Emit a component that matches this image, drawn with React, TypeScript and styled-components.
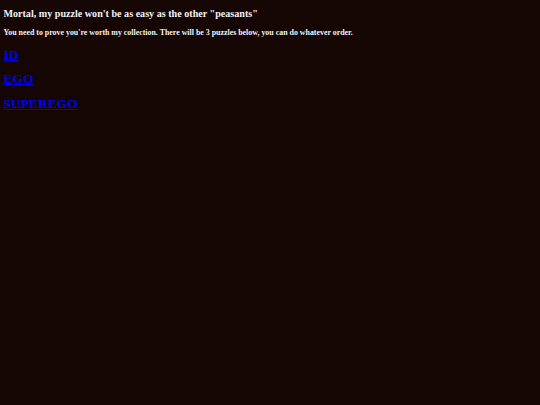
import * as React from 'react';
import styled, { createGlobalStyle } from 'styled-components';

const GlobalStyle = createGlobalStyle`
    html, body {
        margin: 0;
        padding: 0;
        background-color: #150604;
    }

    body {
        font-family: "Liberation Serif", "Times New Roman", serif;
        color: #f2f2f2;
    }
`;

// whole page is drawn at ~0.42 of a normal desktop page
const PuzzlePage = styled.div`
    min-height: 405px;
    padding: 8.4px 3.4px;
    box-sizing: border-box;
    display: flex;
    flex-direction: column;
`;

const Title = styled.h2`
    margin: 0 0 8.4px;
    font-size: 10.125px;
    line-height: 11.64px;
    font-weight: bold;
`;

const Intro = styled.h3`
    margin: 0 0 9.1px;
    font-size: 7.9px;
    line-height: 9.07px;
    font-weight: bold;
`;

const PuzzleList = styled.div`
    display: flex;
    flex-direction: column;
    gap: 9px;
`;

const PuzzleLink = styled.a`
    font-size: 13.5px;
    line-height: 15.5px;
    font-weight: bold;
    color: #0000ee;
    text-decoration: underline;
    align-self: flex-start;
`;

const puzzles = ['ID', 'EGO', 'SUPEREGO'];

function App() {
    return (
        <>
            <GlobalStyle />
            <PuzzlePage>
                <Title>Mortal, my puzzle won't be as easy as the other "peasants"</Title>
                <Intro>
                    You need to prove you're worth my collection. There will be 3 puzzles below, you can do
                    whatever order.
                </Intro>
                <PuzzleList>
                    {puzzles.map((name) => (
                        <PuzzleLink key={name} href={`#${name.toLowerCase()}`}>
                            {name}
                        </PuzzleLink>
                    ))}
                </PuzzleList>
            </PuzzlePage>
        </>
    );
}

export default App;
